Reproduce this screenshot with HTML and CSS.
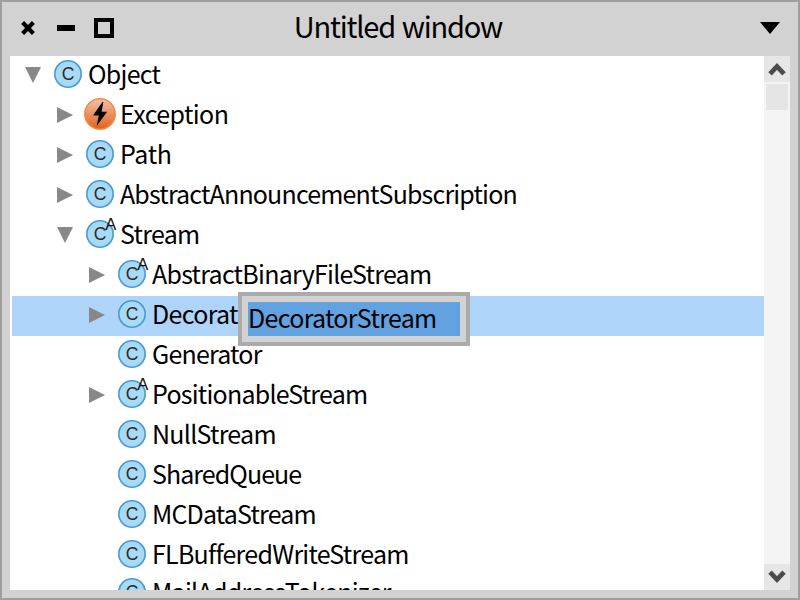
FILE: index.html
```
<!DOCTYPE html>
<html lang="en">
<head>
<meta charset="utf-8">
<title>Untitled window</title>
<link rel="stylesheet" href="styles.css">
</head>
<body>
<svg width="0" height="0" class="defs">
  <defs>
    <linearGradient id="flame" x1="0" y1="0" x2="0" y2="1">
      <stop offset="0" stop-color="#f4c3a8"/>
      <stop offset="1" stop-color="#e0601c"/>
    </linearGradient>
    <symbol id="right" viewBox="0 0 16 16"><path d="M0 0L16 8L0 16Z" fill="#888"/></symbol>
    <symbol id="down" viewBox="0 0 16 16"><path d="M0 0H16L8 16Z" fill="#888"/></symbol>
    <symbol id="up-arrow" viewBox="0 0 18 14"><path d="M2 11.8L9 4.4L16 11.8" fill="none" stroke="#4c4c4c" stroke-width="4.8"/></symbol>
  </defs>
</svg>
<div class="window">
  <header class="titlebar">
    <div class="controls">
      <svg class="close" width="14" height="14" viewBox="0 0 14 14"><path d="M1.6 1.6L12.4 12.4M12.4 1.6L1.6 12.4" stroke="#000" stroke-width="4.2"/></svg>
      <span class="minimize"></span>
      <span class="maximize"></span>
    </div>
    <h1 class="title">Untitled window</h1>
    <svg class="menu" width="20" height="12" viewBox="0 0 20 12"><path d="M0 0H20L10 12Z"/></svg>
  </header>
  <main class="content">
    <ul class="tree" id="tree"></ul>
    <div class="scrollbar">
      <span class="scroll-button"><svg width="18" height="14"><use href="#up-arrow"/></svg></span>
      <span class="thumb"></span>
      <span class="scroll-button bottom"><svg class="flip" width="18" height="14"><use href="#up-arrow"/></svg></span>
    </div>
  </main>
  <div class="editor"><div class="field">DecoratorStream</div></div>
</div>
<script src="tree.js"></script>
</body>
</html>
```
FILE: tree.js
```
// name, depth, toggle, icon, letter spacing, state
const rows = [
  ["Object", 0, "down", "class", -0.75],
  ["Exception", 1, "right", "exception", -0.58],
  ["Path", 1, "right", "class", -0.35],
  ["AbstractAnnouncementSubscription", 1, "right", "class", -0.83],
  ["Stream", 1, "down", "abstract", -0.72],
  ["AbstractBinaryFileStream", 2, "right", "abstract", -0.74],
  ["DecoratorStream", 2, "right", "class", -0.68, "selected"],
  ["Generator", 2, "", "class", -0.8],
  ["PositionableStream", 2, "right", "abstract", -0.77],
  ["NullStream", 2, "", "class", -0.74],
  ["SharedQueue", 2, "", "class", -0.94],
  ["MCDataStream", 2, "", "class", -0.83],
  ["FLBufferedWriteStream", 2, "", "class", -0.74],
  ["MailAddressTokenizer", 2, "", "class", -0.72, "last"],
];

function icon(kind) {
  if (kind === "exception") {
    return `<svg class="icon" width="32" height="40" viewBox="0 0 32 40">
      <circle cx="16" cy="18" r="15.2" fill="url(#flame)" stroke="#f58a4a" stroke-width="1.6"/>
      <path d="M18.4 6L9 19.6L14.8 19.6L12.6 30L23.2 15.8L17.6 15.8L19.4 6Z" fill="#000"/></svg>`;
  }
  const mark = kind === "abstract" ? '<text class="mark" x="21.2" y="14">A</text>' : "";
  return `<svg class="icon" width="32" height="40" viewBox="0 0 32 40">
    <circle cx="16" cy="18" r="13.2" fill="#a9daf5" stroke="#479bd2" stroke-width="1.6"/>
    <text class="letter" x="16" y="24" text-anchor="middle">C</text>${mark}</svg>`;
}

document.getElementById("tree").innerHTML = rows.map(([name, depth, toggle, kind, spacing, state]) =>
  `<li class="row depth-${depth} ${state || ""}">
    <span class="toggle">${toggle ? `<svg width="16" height="16"><use href="#${toggle}"/></svg>` : ""}</span>
    ${icon(kind)}<span class="name" style="letter-spacing:${spacing}px">${name}</span></li>`).join("");
```
FILE: styles.css
```
* { box-sizing: border-box; }

body {
  margin: 0;
  font-family: "Noto Sans CJK SC", "Noto Sans", sans-serif;
  color: #000;
}

.defs { position: absolute; }

.window {
  position: relative;
  display: flex;
  flex-direction: column;
  width: 800px;
  height: 600px;
  padding: 0 8px 8px;
  border: 2px solid #9e9e9e;
  background: #d2d2d2;
  overflow: hidden;
}

.titlebar {
  flex: none;
  display: grid;
  grid-template-columns: 200px 1fr 200px;
  align-items: start;
  height: 54px;
}

.controls { display: flex; align-items: center; padding-left: 11px; height: 52px; }
.minimize { width: 18px; height: 6px; margin-left: 22px; background: #000; }
.maximize { width: 20px; height: 20px; margin-left: 19px; border: 4px solid #000; }

.title {
  margin: 0;
  padding-right: 4px;
  font-size: 29px;
  font-weight: 400;
  line-height: 46px;
  letter-spacing: -1.2px;
  word-spacing: 1.5px;
  text-align: center;
  white-space: nowrap;
}

.menu { justify-self: end; margin: 20px 10px 0 0; }

.content { flex: 1; display: flex; min-height: 0; background: #fff; }

.tree {
  flex: 1;
  margin: 0;
  padding: 0 0 0 2px;
  list-style: none;
  overflow: hidden;
}

.row { display: flex; height: 40px; line-height: 35px; white-space: nowrap; }
.depth-0 { padding-left: 13px; }
.depth-1 { padding-left: 45px; }
.depth-2 { padding-left: 77px; }
.selected { background: #afd4f9; }
.last { margin-top: -2px; }

.toggle { width: 27px; padding-top: 11px; line-height: 0; }
.icon { flex: none; overflow: visible; }
.name { padding-left: 4px; font-size: 25px; }
.letter { font: 17.5px "Liberation Sans", sans-serif; fill: #2a2a2a; }
.mark { font: 16.5px "Liberation Sans", sans-serif; fill: #111; }

.scrollbar {
  width: 26px;
  display: flex;
  flex-direction: column;
  align-items: center;
  background: #f4f4f4;
}

.scroll-button {
  display: flex;
  align-items: center;
  justify-content: center;
  width: 26px;
  height: 26px;
  background: #e6e6e6;
}

.thumb { width: 22px; height: 26px; margin-top: 2px; background: #e5e5e5; }
.bottom { margin-top: auto; }
.flip { transform: scaleY(-1); }

.editor {
  position: absolute;
  left: 236px;
  top: 290px;
  width: 232px;
  height: 54px;
  padding: 6px;
  border: 4px solid #ababab;
  background: #d2d2d2;
}

.field {
  height: 34px;
  background: #62a2e0;
  font-size: 25px;
  line-height: 31px;
  letter-spacing: -0.68px;
  white-space: nowrap;
}
```
